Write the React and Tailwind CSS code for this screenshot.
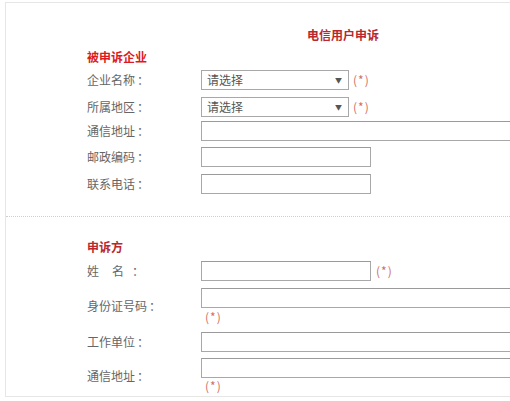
const font = {
  fontFamily: '"Noto Sans CJK SC", "Liberation Sans", sans-serif',
};

function Req({ className = "" }) {
  return (
    <span className={"text-[12px] leading-[14px] tracking-[1px] text-[#cf6f68] " + className}>
      (*)
    </span>
  );
}

function Label({ text }) {
  return (
    <div className="flex w-[114px] shrink-0 text-[12px] leading-[18px] text-[#666]">
      <span>{text}</span>
      <span className="ml-[2px]">：</span>
    </div>
  );
}

function SelectBox() {
  return (
    <div className="flex h-[20px] w-[148px] items-center justify-between border border-[#a8a8a8] pl-[5px] pr-[6px] text-[12px] text-[#555]">
      <span>请选择</span>
      <span className="text-[7px] text-[#555]">▼</span>
    </div>
  );
}

function Input({ wide }) {
  return (
    <div
      className={
        "h-[20px] border border-[#a8a8a8] border-t-[#9a9a9a] bg-white " +
        (wide ? "w-[360px]" : "w-[170px]")
      }
    />
  );
}

export default function App() {
  return (
    <div className="h-[401px] w-[510px] overflow-hidden bg-white" style={font}>
      <div className="ml-[5px] mt-[2px] h-[395px] w-[676px] border border-[#e6e6e6]">
        <h1 className="pt-[23px] text-center text-[12px] font-bold leading-[18px] text-[#b8282e]">
          电信用户申诉
        </h1>

        <div className="pl-[81px]">
          <h2 className="mt-[4px] text-[12px] font-bold leading-[18px] text-[#dc1a22]">
            被申诉企业
          </h2>
          <div className="mt-[4px] flex items-center">
            <Label text="企业名称" />
            <SelectBox />
            <Req className="ml-[4px]" />
          </div>
          <div className="mt-[7px] flex items-center">
            <Label text="所属地区" />
            <SelectBox />
            <Req className="ml-[4px]" />
          </div>
          <div className="mt-[4px] flex items-center">
            <Label text="通信地址" />
            <Input wide />
          </div>
          <div className="mt-[6px] flex items-center">
            <Label text="邮政编码" />
            <Input />
          </div>
          <div className="mt-[7px] flex items-center">
            <Label text="联系电话" />
            <Input />
          </div>
        </div>

        <div className="mt-[22px] border-t border-dotted border-[#cfcfcf]" />

        <div className="pl-[81px]">
          <h2 className="mt-[21px] text-[12px] font-bold leading-[18px] text-[#b8282e]">
            申诉方
          </h2>
          <div className="mt-[5px] flex items-center">
            <div className="flex w-[114px] shrink-0 text-[12px] leading-[18px] text-[#666]">
              <span>姓</span>
              <span className="w-[13px]" />
              <span>名</span>
              <span className="ml-[8px]">：</span>
            </div>
            <Input />
            <Req className="ml-[5px]" />
          </div>
          <div className="mt-[7px] flex items-center">
            <Label text="身份证号码" />
            <div className="flex flex-col">
              <Input wide />
              <Req className="mt-[2px] pl-[4px]" />
            </div>
          </div>
          <div className="mt-[8px] flex items-center">
            <Label text="工作单位" />
            <Input wide />
          </div>
          <div className="mt-[6px] flex items-center">
            <Label text="通信地址" />
            <div className="flex flex-col">
              <Input wide />
              <Req className="mt-[1px] pl-[4px]" />
            </div>
          </div>
        </div>
      </div>
    </div>
  );
}
